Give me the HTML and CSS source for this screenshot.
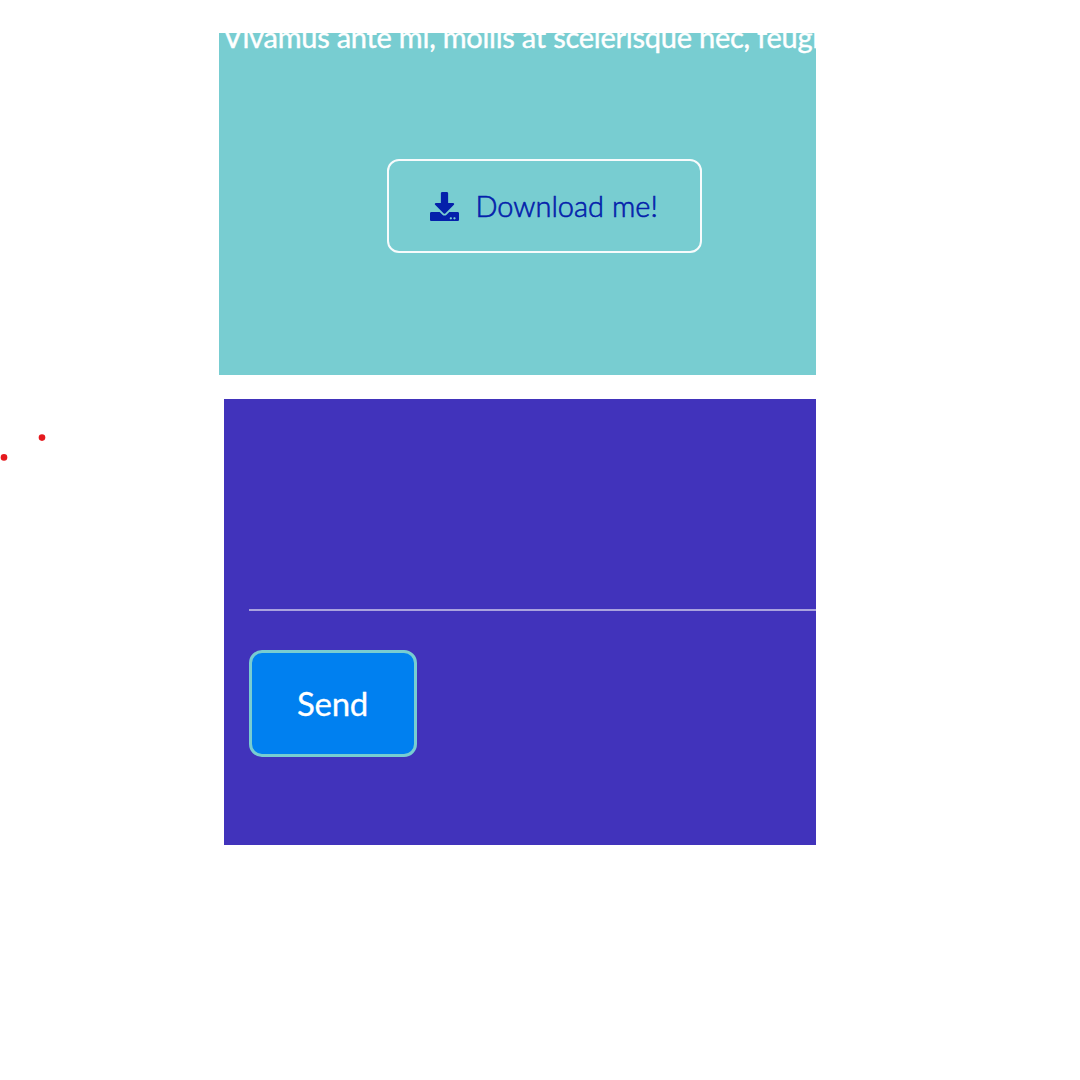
FILE: index.html
```html
<!DOCTYPE html>
<html lang="en">
<head>
<meta charset="utf-8">
<title>Buttons</title>
<link rel="stylesheet" href="styles.css">
</head>
<body>
<main class="page">
  <section class="panel panel-download">
    <p class="copy">Vivamus ante mi, mollis at scelerisque nec, feugi</p>
    <a class="download">
      <svg class="download-icon" viewBox="0 0 512 512" aria-hidden="true"><path fill="currentColor" d="M216 0h80c13.3 0 24 10.7 24 24v168h87.7c17.8 0 26.7 21.5 14.1 34.1L269.7 378.3c-7.5 7.5-19.8 7.5-27.3 0L90.1 226.1c-12.6-12.6-3.7-34.1 14.1-34.1H192V24c0-13.3 10.7-24 24-24zm296 376v112c0 13.3-10.7 24-24 24H24c-13.3 0-24-10.7-24-24V376c0-13.3 10.7-24 24-24h146.7l49 49c20.1 20.1 52.5 20.1 72.6 0l49-49H488c13.3 0 24 10.7 24 24zm-124 88c0-11-9-20-20-20s-20 9-20 20 9 20 20 20 20-9 20-20zm64 0c0-11-9-20-20-20s-20 9-20 20 9 20 20 20 20-9 20-20z"/></svg>
      <span class="download-label">Download me!</span>
    </a>
  </section>
  <section class="panel panel-form">
    <div class="field-line"></div>
    <button class="send" type="button">Send</button>
  </section>
</main>
<svg class="marks" viewBox="0 0 60 40" aria-hidden="true"><circle cx="42" cy="12.6" r="3.3"/><circle cx="4" cy="32.4" r="3.3"/></svg>
</body>
</html>
```
FILE: styles.css
```css
* { box-sizing: border-box; }
body { margin: 0; background: #fff; font-family: Lato, "Open Sans", sans-serif; }
.page { display: flex; flex-direction: column; width: 816px; height: 1080px; padding-top: 33px; gap: 24px; }
.panel { overflow: hidden; display: flex; flex-direction: column; align-items: flex-start; }
.panel-download { height: 342px; margin-left: 219px; background: #78cdd1; }
.copy { margin: -14px 0 0 4px; height: 36px; line-height: 36px; font-size: 29px; font-weight: 400; letter-spacing: -0.25px; -webkit-text-stroke: 0.4px #fff; color: #fff; white-space: nowrap; }
.download { display: flex; align-items: center; width: 315px; height: 94px; margin: 104px 0 0 168px; padding-left: 40.5px; border: 2px solid #f7fbfc; border-radius: 12px; color: #0420ab; font-size: 29px; font-weight: 300; gap: 17px; white-space: nowrap; }
.download-icon { width: 29px; height: 29px; }
.download-label { padding-bottom: 2px; -webkit-text-stroke: 0.6px #0420ab; }
.panel-form { height: 446px; margin-left: 224px; padding-left: 25px; background: #4133bb; }
.field-line { width: 100%; height: 2px; margin-top: 210px; background: #aaa3de; }
.send { width: 168px; height: 107px; margin-top: 39px; padding: 0 1px 2px 0; border: 3px solid #78cdd1; border-radius: 13px; background: #0080f0; color: #fff; font: 400 33px Lato, sans-serif; letter-spacing: -0.3px; -webkit-text-stroke: 0.3px #fff; }
.marks { position: absolute; left: 0; top: 425px; width: 60px; height: 40px; fill: #e5191e; }
```
